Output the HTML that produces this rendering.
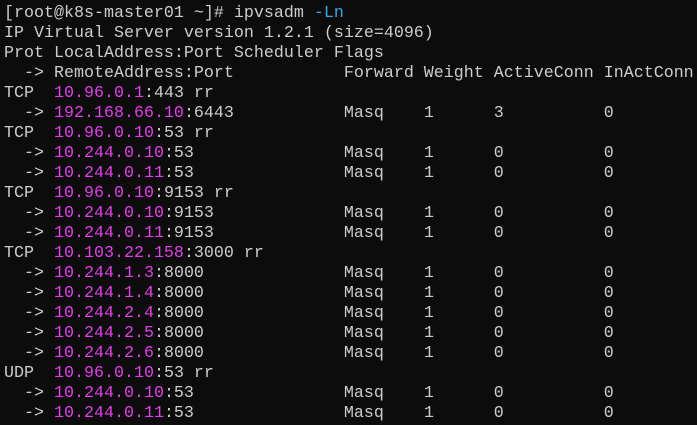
<!DOCTYPE html>
<html><head><meta charset="utf-8"><style>
html,body{margin:0;padding:0;background:#0c0c0c;width:697px;height:425px;overflow:hidden}
pre{margin:0;position:absolute;left:4px;top:4px;font-family:"Liberation Mono","DejaVu Sans Mono",monospace;font-size:16.67px;line-height:20px;color:#cccccc;white-space:pre}
.m{color:#e040e8}.c{color:#3aa6e0}
</style></head><body><pre>[root@k8s-master01 ~]# ipvsadm <span class="c">-Ln</span>
IP Virtual Server version 1.2.1 (size=4096)
Prot LocalAddress:Port Scheduler Flags
  -&gt; RemoteAddress:Port           Forward Weight ActiveConn InActConn
TCP  <span class="m">10.96.0.1</span>:443 rr
  -&gt; <span class="m">192.168.66.10</span>:6443           Masq    1      3          0
TCP  <span class="m">10.96.0.10</span>:53 rr
  -&gt; <span class="m">10.244.0.10</span>:53               Masq    1      0          0
  -&gt; <span class="m">10.244.0.11</span>:53               Masq    1      0          0
TCP  <span class="m">10.96.0.10</span>:9153 rr
  -&gt; <span class="m">10.244.0.10</span>:9153             Masq    1      0          0
  -&gt; <span class="m">10.244.0.11</span>:9153             Masq    1      0          0
TCP  <span class="m">10.103.22.158</span>:3000 rr
  -&gt; <span class="m">10.244.1.3</span>:8000              Masq    1      0          0
  -&gt; <span class="m">10.244.1.4</span>:8000              Masq    1      0          0
  -&gt; <span class="m">10.244.2.4</span>:8000              Masq    1      0          0
  -&gt; <span class="m">10.244.2.5</span>:8000              Masq    1      0          0
  -&gt; <span class="m">10.244.2.6</span>:8000              Masq    1      0          0
UDP  <span class="m">10.96.0.10</span>:53 rr
  -&gt; <span class="m">10.244.0.10</span>:53               Masq    1      0          0
  -&gt; <span class="m">10.244.0.11</span>:53               Masq    1      0          0</pre></body></html>
